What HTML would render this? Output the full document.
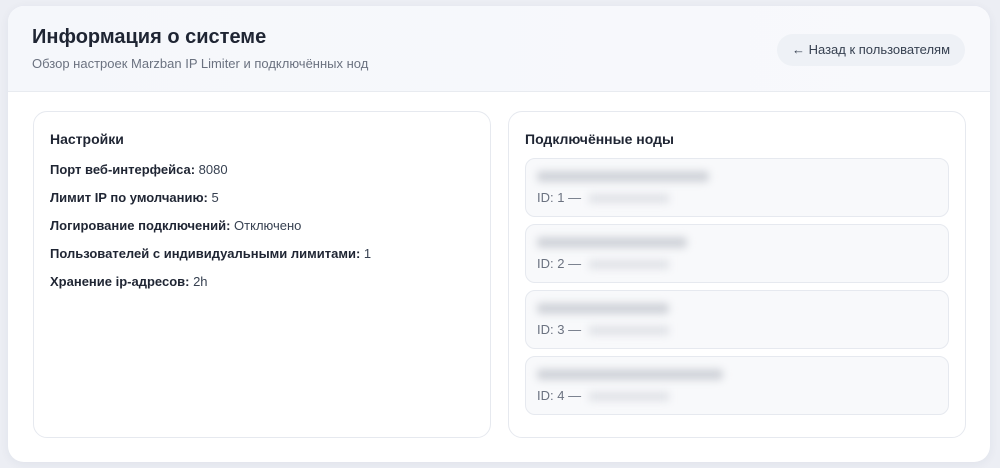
<!DOCTYPE html>
<html><head><meta charset="utf-8"><style>
*{box-sizing:border-box;margin:0;padding:0}
body{width:1000px;height:468px;background:#eceef4;font-family:"Liberation Sans",sans-serif;color:#1f2533;position:relative;overflow:hidden}
.card{position:absolute;left:8px;top:6px;width:982px;height:456px;background:#fff;border-radius:16px;box-shadow:0 2px 10px rgba(40,50,80,.06);overflow:hidden}
.hdr{height:86px;background:linear-gradient(90deg,#f5f7fb,#f8f9fc);border-bottom:1px solid #e8ebf0;position:relative}
h1{position:absolute;left:24px;top:20px;font-size:20px;font-weight:bold;color:#1f2533}
.sub{position:absolute;left:24px;top:50px;font-size:13px;color:#6b7280}
.btn{position:absolute;left:769px;top:28px;width:188px;height:32px;border-radius:16px;background:#eef1f6;font-size:13px;color:#374151;text-align:center;line-height:32px}
.pan{position:absolute;top:105px;height:327px;border:1px solid #e6e9ef;border-radius:14px;background:#fff}
.pan h2{font-size:14px;font-weight:bold;position:absolute;left:16px;top:19px}
.row{position:absolute;left:16px;font-size:13px;color:#374151}
.row b{color:#1f2533}
.node{position:absolute;left:16px;width:424px;height:59px;border:1px solid #e6e9ef;border-radius:10px;background:#f8f9fb}
.nn{position:absolute;left:11px;top:12px;width:172px;height:11px;background:#d0d3d9;filter:blur(4px);border-radius:4px}
.id{position:absolute;left:11px;top:31px;font-size:13px;color:#6b7280}
.ip{display:inline-block;width:80px;height:9px;background:#e0e2e7;filter:blur(4px);vertical-align:middle;margin-left:4px}
</style></head><body>
<div class="card">
<div class="hdr"><h1>Информация о системе</h1><div class="sub">Обзор настроек Marzban IP Limiter и подключённых нод</div><div class="btn">← Назад к пользователям</div></div>
<div class="pan" style="left:25px;width:458px">
<h2>Настройки</h2>
<div class="row" style="top:50px"><b>Порт веб-интерфейса:</b> 8080</div>
<div class="row" style="top:78px"><b>Лимит IP по умолчанию:</b> 5</div>
<div class="row" style="top:106px"><b>Логирование подключений:</b> Отключено</div>
<div class="row" style="top:134px"><b>Пользователей с индивидуальными лимитами:</b> 1</div>
<div class="row" style="top:162px"><b>Хранение ip-адресов:</b> 2h</div>
</div>
<div class="pan" style="left:500px;width:458px">
<h2>Подключённые ноды</h2>
<div class="node" style="top:46px"><div class="nn"></div><div class="id">ID: 1 — <span class="ip"></span></div></div>
<div class="node" style="top:112px"><div class="nn" style="width:150px"></div><div class="id">ID: 2 — <span class="ip"></span></div></div>
<div class="node" style="top:178px"><div class="nn" style="width:132px"></div><div class="id">ID: 3 — <span class="ip"></span></div></div>
<div class="node" style="top:244px"><div class="nn" style="width:186px"></div><div class="id">ID: 4 — <span class="ip"></span></div></div>
</div>
</div>
</body></html>
